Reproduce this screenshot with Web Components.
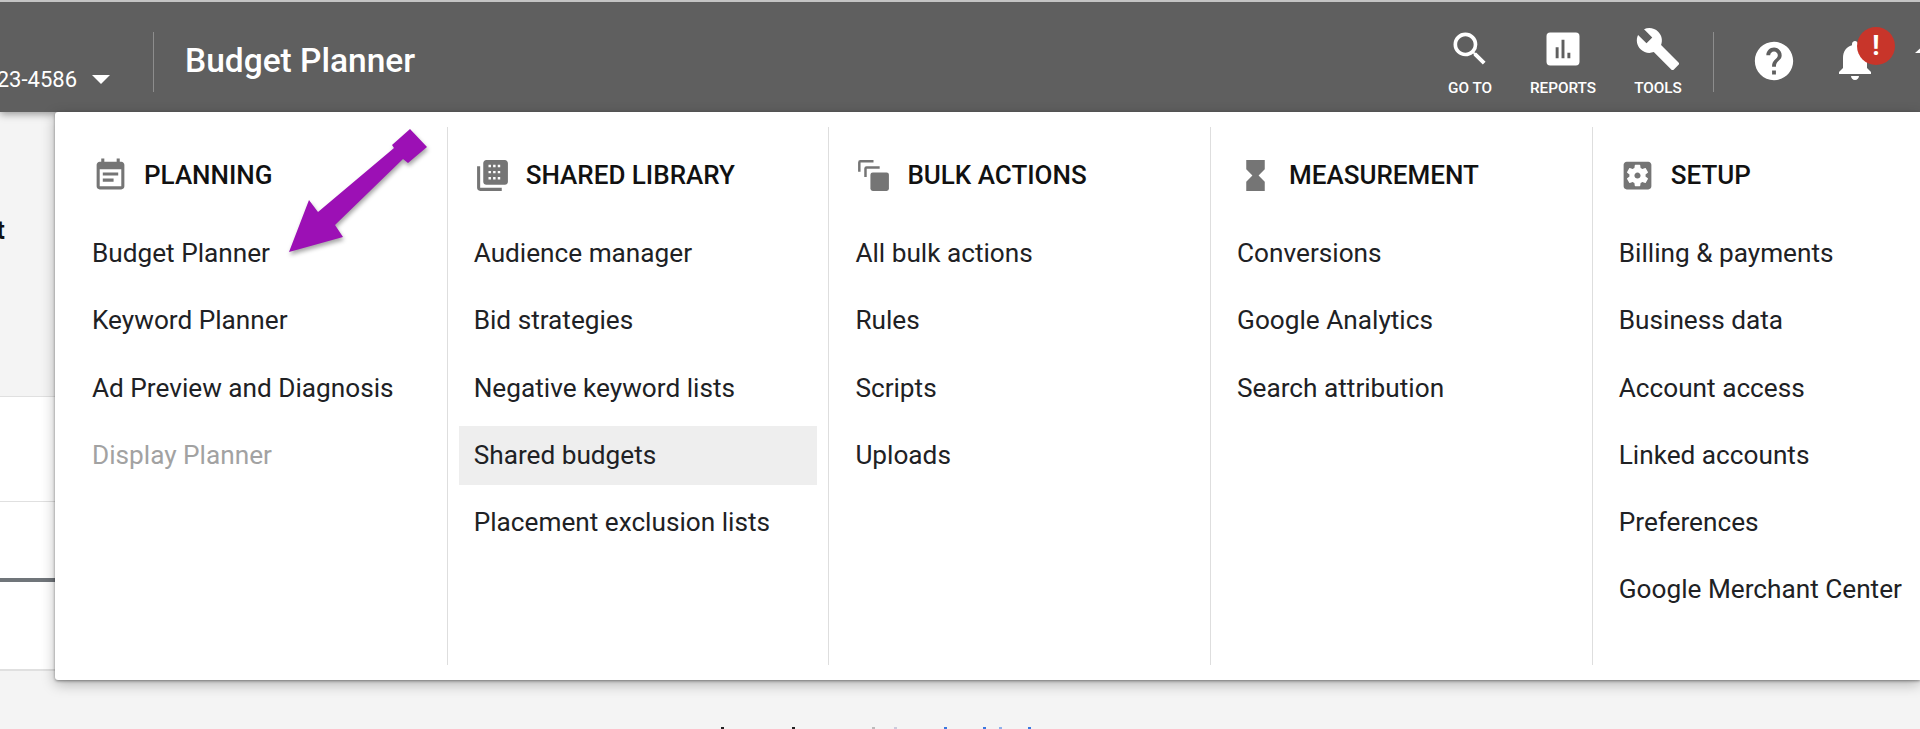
<!DOCTYPE html>
<html>
<head>
<meta charset="utf-8">
<title>Budget Planner</title>
<style>
html,body{margin:0;padding:0;height:729px;overflow:hidden;background:#f4f4f4;font-family:Roboto,"Liberation Sans",sans-serif;}
</style>
</head>
<body>
<ads-page>
	<ads-header slot="header" title-text="Budget Planner" account="23-4586">
		<nav-button label="GO TO" style="width:92px"><app-icon name="search" size="44" color="#fff"></app-icon></nav-button>
		<nav-button label="REPORTS" style="width:94px"><app-icon name="reports" size="44" color="#fff"></app-icon></nav-button>
		<nav-button label="TOOLS" style="width:96px"><app-icon name="build" size="46" color="#fff"></app-icon></nav-button>
	</ads-header>
	<tools-menu slot="menu">
		<menu-column heading="PLANNING" icon="event" first>
			<menu-item>Budget Planner</menu-item>
			<menu-item>Keyword Planner</menu-item>
			<menu-item>Ad Preview and Diagnosis</menu-item>
			<menu-item disabled>Display Planner</menu-item>
		</menu-column>
		<menu-column heading="SHARED LIBRARY" icon="library">
			<menu-item>Audience manager</menu-item>
			<menu-item>Bid strategies</menu-item>
			<menu-item>Negative keyword lists</menu-item>
			<menu-item active>Shared budgets</menu-item>
			<menu-item>Placement exclusion lists</menu-item>
		</menu-column>
		<menu-column heading="BULK ACTIONS" icon="layers">
			<menu-item>All bulk actions</menu-item>
			<menu-item>Rules</menu-item>
			<menu-item>Scripts</menu-item>
			<menu-item>Uploads</menu-item>
		</menu-column>
		<menu-column heading="MEASUREMENT" icon="hourglass">
			<menu-item>Conversions</menu-item>
			<menu-item>Google Analytics</menu-item>
			<menu-item>Search attribution</menu-item>
		</menu-column>
		<menu-column heading="SETUP" icon="settings" last>
			<menu-item>Billing &amp; payments</menu-item>
			<menu-item>Business data</menu-item>
			<menu-item>Account access</menu-item>
			<menu-item>Linked accounts</menu-item>
			<menu-item>Preferences</menu-item>
			<menu-item>Google Merchant Center</menu-item>
		</menu-column>
	</tools-menu>
</ads-page>

<script>
const ICONS = {
	search:`<path d="M15.5 14h-.79l-.28-.27A6.471 6.471 0 0 0 16 9.5 6.5 6.5 0 1 0 9.5 16c1.61 0 3.09-.59 4.23-1.57l.27.28v.79l5 4.99L20.49 19l-4.99-5zm-6 0C7.01 14 5 11.99 5 9.5S7.01 5 9.5 5 14 7.01 14 9.5 11.99 14 9.5 14z"/>`,
	reports:`<path fill-rule="evenodd" d="M5 3h14a2 2 0 0 1 2 2v14a2 2 0 0 1-2 2H5a2 2 0 0 1-2-2V5a2 2 0 0 1 2-2zm3 8v6h1.6v-6zm3.2-4v10h1.6V7zm3.2 7v3H16v-3z"/>`,
	build:`<path d="M22.7 19l-9.1-9.1c.9-2.3.4-5-1.5-6.9-2-2-5-2.4-7.4-1.3L9 6 6 9 1.6 4.7C.4 7.1.9 10.1 2.9 12.1c1.9 1.9 4.6 2.4 6.9 1.5l9.1 9.1c.4.4 1 .4 1.4 0l2.3-2.3c.5-.4.5-1.1.1-1.4z"/>`,
	help:`<path d="M12 2C6.48 2 2 6.48 2 12s4.48 10 10 10 10-4.48 10-10S17.52 2 12 2zm1 17h-2v-2h2v2zm2.07-7.75l-.9.92C13.45 12.9 13 13.5 13 15h-2v-.5c0-1.1.45-2.1 1.17-2.83l1.24-1.26c.37-.36.59-.86.59-1.41 0-1.1-.9-2-2-2s-2 .9-2 2H8c0-2.21 1.79-4 4-4s4 1.79 4 4c0 .88-.36 1.68-.93 2.25z"/>`,
	bell:`<path d="M12 22c1.1 0 2-.9 2-2h-4c0 1.1.89 2 2 2zm6-6v-5c0-3.07-1.64-5.64-4.5-6.32V4c0-.83-.67-1.5-1.5-1.5s-1.5.67-1.5 1.5v.68C7.63 5.36 6 7.92 6 11v5l-2 2v1h16v-1l-2-2z"/>`,
	event:`<path d="M17 10H7v2h10v-2zm2-7h-1V1h-2v2H8V1H6v2H5c-1.11 0-1.99.9-1.99 2L3 19c0 1.1.89 2 2 2h14c1.1 0 2-.9 2-2V5c0-1.1-.9-2-2-2zm0 16H5V8h14v11zm-5-5H7v2h7v-2z"/>`,
	library:`<path d="M4 6H2v14c0 1.1.9 2 2 2h14v-2H4V6z"/><path fill-rule="evenodd" d="M8 2h12c1.1 0 2 .9 2 2v12c0 1.1-.9 2-2 2H8c-1.1 0-2-.9-2-2V4c0-1.1.9-2 2-2zm1.400 3v1.600H11V5zm3 0v1.600H14V5zm3 0v1.600H17V5zm-6 4v1.600H11V9zm3 0v1.600H14V9zm3 0v1.600H17V9zm-6 4v1.600H11V13zm3 0v1.600H14V13zm3 0v1.600H17V13z"/>`,
	layers:`<rect x="10" y="10" width="12" height="12" rx="1.500"/><path d="M2 9.500V3.500A1.500 1.500 0 0 1 3.500 2H12v1.600H3.600v5.900z"/><path d="M6 13V7.500A1.500 1.500 0 0 1 7.500 6H16v1.600H7.600V13z"/>`,
	hourglass:`<path d="M6 2v6h.01L6 8.010 10 12l-4 4 .01.010H6V22h12v-5.990h-.01L18 16l-4-4 4-3.990-.01-.010H18V2H6z"/>`,
	settings:`<path d="M12 10c-1.100 0-2 .9-2 2s.9 2 2 2 2-.9 2-2-.9-2-2-2zm7-7H5c-1.110 0-2 .9-2 2v14c0 1.100.89 2 2 2h14c1.110 0 2-.9 2-2V5c0-1.100-.89-2-2-2zm-1.750 9c0 .23-.02.46-.05.68l1.480 1.160c.13.11.17.3.08.45l-1.400 2.420c-.09.15-.27.21-.43.15l-1.740-.7c-.36.28-.76.51-1.180.69l-.26 1.850c-.03.17-.18.3-.35.3h-2.800c-.17 0-.32-.13-.35-.29l-.26-1.850c-.43-.18-.82-.41-1.180-.69l-1.740.7c-.16.06-.34 0-.43-.15l-1.400-2.420c-.09-.15-.05-.34.08-.45l1.480-1.160c-.03-.23-.05-.46-.05-.69 0-.23.02-.46.05-.68l-1.480-1.160c-.13-.11-.17-.3-.08-.45l1.400-2.420c.09-.15.27-.21.43-.15l1.740.7c.36-.28.76-.51 1.180-.69l.26-1.850c.03-.17.18-.3.35-.3h2.800c.17 0 .32.13.35.29l.26 1.850c.43.18.82.41 1.180.69l1.740-.7c.16-.06.34 0 .43.15l1.400 2.420c.09.15.05.34-.08.45l-1.480 1.160c.03.23.05.46.05.69z"/>`
};

class AppIcon extends HTMLElement{
	constructor(){
		super();
		const size = this.getAttribute("size") || 37;
		const color = this.getAttribute("color") || "#757575";
		this.attachShadow({mode:"open"}).innerHTML = `
		<style>:host{display:block;width:${size}px;height:${size}px;flex:none;}svg{display:block;width:100%;height:100%;fill:${color};}</style>
		<svg viewBox="0 0 24 24">${ICONS[this.getAttribute("name")]}</svg>`;
	}
}
customElements.define("app-icon",AppIcon);

class NavButton extends HTMLElement{
	constructor(){
		super();
		this.attachShadow({mode:"open"}).innerHTML = `
		<style>
		:host{display:flex;flex-direction:column;align-items:center;height:78px;position:relative;}
		.ico{height:50px;margin-top:-2px;display:flex;align-items:center;justify-content:center;}
		span{font-size:15.300px;font-weight:500;color:#fff;line-height:18px;margin-top:5px;white-space:nowrap;}
		</style>
		<div class="ico"><slot></slot></div>
		<span>${this.getAttribute("label")}</span>`;
	}
}
customElements.define("nav-button",NavButton);

class AdsHeader extends HTMLElement{
	constructor(){
		super();
		this.attachShadow({mode:"open"}).innerHTML = `
		<style>
		:host{display:flex;box-sizing:border-box;height:112px;background:#5f5f5f;border-top:2px solid #c4c4c4;color:#fff;position:relative;box-shadow:0 2px 8px rgba(0,0,0,.4);z-index:1;}
		.account{width:153px;flex:none;display:flex;justify-content:flex-end;align-items:center;padding:44px 43px 0 0;box-sizing:border-box;font-size:22px;white-space:nowrap;overflow:hidden;}
		.account i{display:block;flex:none;width:0;height:0;border:9px solid transparent;border-top:9px solid #fff;border-bottom:0;margin-left:15px;}
		.sep{width:1px;height:60px;background:#8d8d8d;margin-top:30px;flex:none;}
		h1{margin:8px 0 0 31px;align-self:center;font-size:33.500px;font-weight:500;line-height:40px;white-space:nowrap;}
		.right{margin-left:auto;display:flex;align-items:flex-start;padding-top:24px;}
		.right .sep{margin:6px 37px 0 7px;}
		.bell{position:relative;margin-left:34px;margin-top:10px;}
		.help{margin-top:12px;}
		.badge{position:absolute;left:26px;top:-9px;width:38px;height:38px;border-radius:50%;background:#c8352a;color:#fff;font-size:27px;font-weight:700;line-height:38px;text-align:center;}
		.up{width:0;height:0;border:9px solid transparent;border-bottom:8px solid #fff;border-top:0;margin:19px -13px 0 36px;}
		</style>
		<div class="account"><span>${this.getAttribute("account")}</span><i></i></div>
		<div class="sep"></div>
		<h1>${this.getAttribute("title-text")}</h1>
		<div class="right">
			<slot></slot>
			<div class="sep"></div>
			<app-icon class="help" name="help" size="46" color="#fff"></app-icon>
			<div class="bell"><app-icon name="bell" size="48" color="#fff"></app-icon><div class="badge">!</div></div>
			<div class="up"></div>
		</div>`;
	}
}
customElements.define("ads-header",AdsHeader);

class MenuItem extends HTMLElement{
	constructor(){
		super();
		this.attachShadow({mode:"open"}).innerHTML = `
		<style>
		:host{display:block;height:59px;line-height:59px;margin-bottom:8.300px;padding:0 15px;font-size:26.200px;color:#202124;white-space:nowrap;}
		:host([active]){background:#eee;}
		:host([disabled]){color:#a2a2a2;}
		</style>
		<slot></slot>`;
	}
}
customElements.define("menu-item",MenuItem);

class MenuColumn extends HTMLElement{
	constructor(){
		super();
		this.attachShadow({mode:"open"}).innerHTML = `
		<style>
		:host{display:block;box-sizing:border-box;width:381.700px;flex:none;padding:0 11px;border-right:1.500px solid #dedede;}
		:host([first]){width:392.700px;padding-left:22px;}
		:host([last]){flex:1;border-right:0;}
		.head{display:flex;box-sizing:border-box;align-items:center;gap:15px;height:97px;padding:0 15px 1px;font-size:26px;font-weight:500;color:#111;white-space:nowrap;}
		</style>
		<div class="head"><app-icon name="${this.getAttribute("icon")}" size="37"></app-icon><span>${this.getAttribute("heading")}</span></div>
		<slot></slot>`;
	}
}
customElements.define("menu-column",MenuColumn);

class ToolsMenu extends HTMLElement{
	constructor(){
		super();
		this.attachShadow({mode:"open"}).innerHTML = `
		<style>
		:host{position:absolute;left:55px;right:0;top:112px;height:568px;box-sizing:border-box;padding:15px 0;display:flex;background:#fff;border-radius:3px 0 0 3px;box-shadow:0 1px 3px rgba(0,0,0,.4),0 4px 14px rgba(0,0,0,.28);z-index:2;}
		.arrow{position:absolute;left:220px;top:0;width:240px;height:160px;overflow:visible;filter:drop-shadow(1px 3px 2px rgba(0,0,0,.35));}
		</style>
		<slot></slot>
		<!-- arrow points are page coords minus the panel origin -->
		<svg class="arrow" viewBox="220 0 240 160"><polygon fill="#9c10b5" points="355,17 372,35 353,51 348,47 280,113 288,125 234,140 254,88 263,100 339,36 337,33"/></svg>`;
	}
}
customElements.define("tools-menu",ToolsMenu);

class PageBackdrop extends HTMLElement{
	constructor(){
		super();
		this.attachShadow({mode:"open"}).innerHTML = `
		<style>
		:host{display:block;}
		.top{height:284px;box-sizing:border-box;padding-top:103px;font-size:26px;font-weight:700;line-height:30px;color:#111;text-indent:-4px;overflow:hidden;}
		.row{background:#fff;border-top:1.500px solid #e0e0e0;box-sizing:border-box;}
		.r1{height:105px;}
		.r2{height:77px;}
		.r3{height:91px;border-top:4px solid #70757a;}
		.end{height:1.500px;background:#e0e0e0;}
		.foot{display:flex;height:2px;margin-top:56.500px;padding-left:721px;}
		.foot i{display:block;width:3px;height:2px;flex:none;}
		</style>
		<div class="top">t</div>
		<div class="row r1"></div>
		<div class="row r2"></div>
		<div class="row r3"></div>
		<div class="end"></div>
		<div class="foot">
			<i style="background:#222"></i>
			<i style="background:#222;margin-left:68px"></i>
			<i style="background:#bbb;margin-left:77px"></i>
			<i style="background:#ccd;margin-left:19px"></i>
			<i style="background:#3b78e0;margin-left:47px"></i>
			<i style="background:#3b78e0;margin-left:36px"></i>
			<i style="background:#8fb0ea;margin-left:13px"></i>
			<i style="background:#3b78e0;margin-left:26px"></i>
		</div>`;
	}
}
customElements.define("page-backdrop",PageBackdrop);

class AdsPage extends HTMLElement{
	constructor(){
		super();
		this.attachShadow({mode:"open"}).innerHTML = `
		<style>:host{display:block;position:relative;height:729px;overflow:hidden;background:#f4f4f4;}</style>
		<slot name="header"></slot>
		<page-backdrop></page-backdrop>
		<slot name="menu"></slot>`;
	}
}
customElements.define("ads-page",AdsPage);
</script>
</body>
</html>
